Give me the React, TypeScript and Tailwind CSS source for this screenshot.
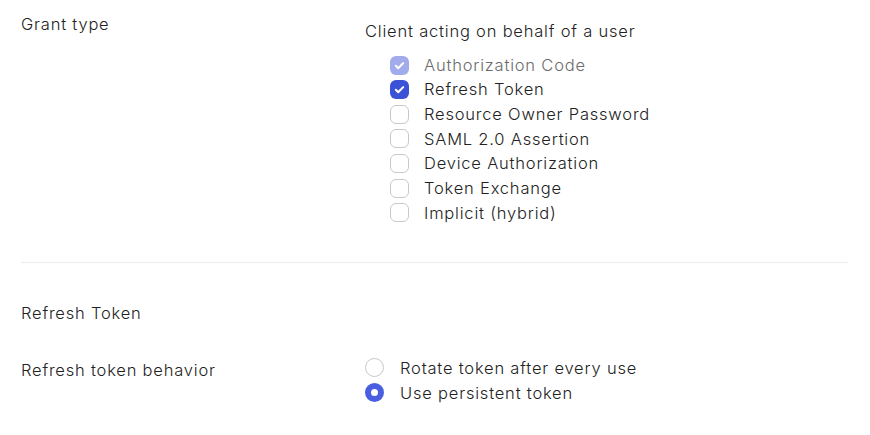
import React from 'react';

const grants = [
  { label: 'Authorization Code', checked: true, disabled: true },
  { label: 'Refresh Token', checked: true },
  { label: 'Resource Owner Password' },
  { label: 'SAML 2.0 Assertion' },
  { label: 'Device Authorization' },
  { label: 'Token Exchange' },
  { label: 'Implicit (hybrid)' },
];

function Check({ checked, disabled }: { checked?: boolean; disabled?: boolean }) {
  if (!checked) {
    return <span className="w-[19px] h-[19px] rounded-[6px] border-[1.5px] border-[#c8c8c8] bg-white shrink-0" />;
  }
  return (
    <span
      className={`w-[19px] h-[19px] rounded-[6px] flex items-center justify-center shrink-0 ${
        disabled ? 'bg-[#a2abeb]' : 'bg-[#3b51d6]'
      }`}
    >
      <svg width="13" height="13" viewBox="0 0 12 12" fill="none">
        <path d="M2.6 6.3l2.2 2.2 4.6-4.7" stroke="white" strokeWidth="1.9" strokeLinecap="round" strokeLinejoin="round" />
      </svg>
    </span>
  );
}

function Radio({ checked }: { checked?: boolean }) {
  return checked ? (
    <span className="w-[19px] h-[19px] rounded-full border-[6px] border-[#4a5fe0] bg-white shrink-0" />
  ) : (
    <span className="w-[19px] h-[19px] rounded-full border-[1.5px] border-[#c8c8c8] bg-white shrink-0" />
  );
}

export default function App() {
  return (
    <div
      className="w-[870px] h-[435px] bg-white text-[#222] text-[16.5px] font-light tracking-[0.8px] px-[21px] pt-[12px]"
      style={{ fontFamily: 'Inter, "Noto Sans", sans-serif' }}
    >
      {/* Grant type */}
      <div className="flex">
        <div className="w-[344px] leading-6">Grant type</div>
        <div className="mt-[7px]">
          <div className="leading-6">Client acting on behalf of a user</div>
          <div className="mt-[10px] ml-[25px] flex flex-col gap-[0.67px]">
            {grants.map((g) => (
              <label key={g.label} className="flex items-center gap-[15px] h-6">
                <Check checked={g.checked} disabled={g.disabled} />
                <span className={g.disabled ? 'text-[#6b6b6b]' : ''}>{g.label}</span>
              </label>
            ))}
          </div>
        </div>
      </div>

      <div className="mt-[37px] mr-[1px] border-t border-[#ececec]" />

      {/* Refresh token */}
      <div className="mt-[38px] leading-6">Refresh Token</div>

      <div className="flex mt-[31px]">
        <div className="w-[344px] leading-6 mt-[2px]">Refresh token behavior</div>
        <div className="flex flex-col gap-[1px]">
          <label className="flex items-center gap-4 h-6">
            <Radio />
            <span>Rotate token after every use</span>
          </label>
          <label className="flex items-center gap-4 h-6">
            <Radio checked />
            <span>Use persistent token</span>
          </label>
        </div>
      </div>
    </div>
  );
}
